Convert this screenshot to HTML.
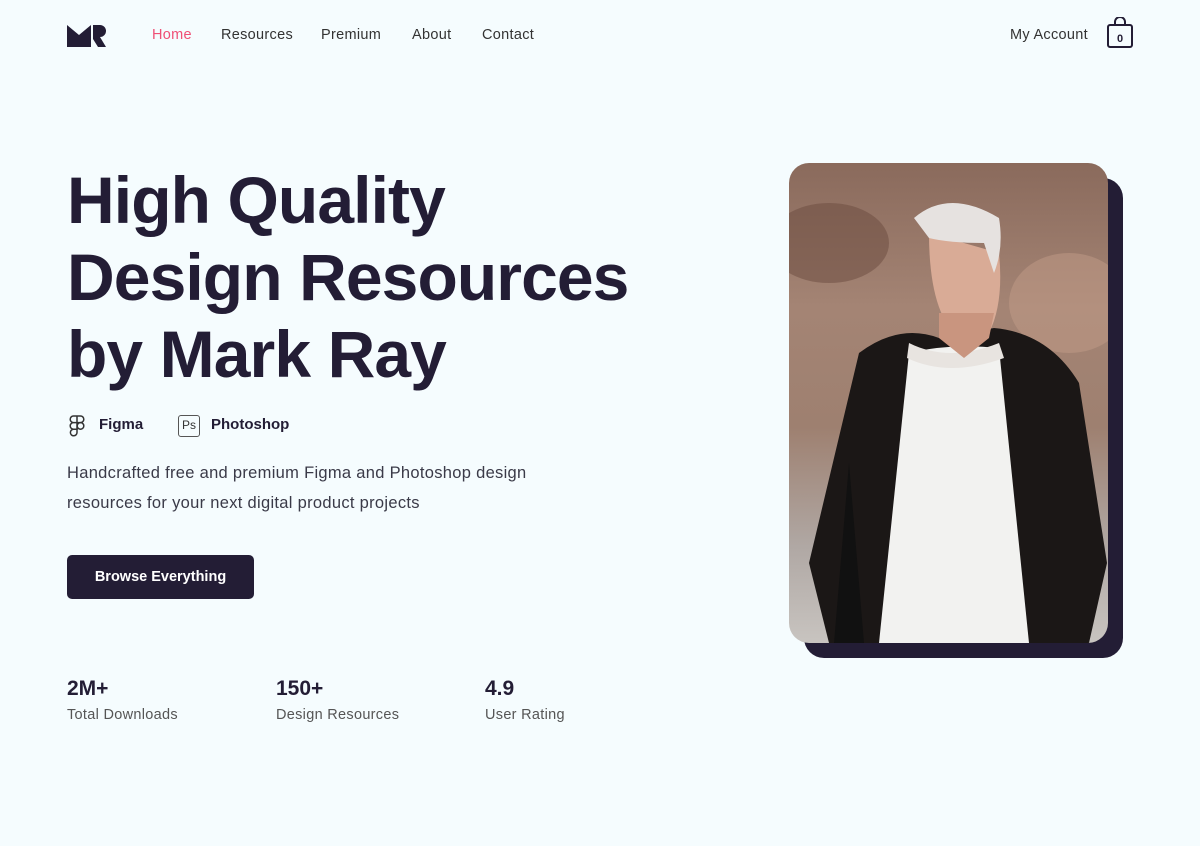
<!DOCTYPE html>
<html><head><meta charset="utf-8"><style>
*{margin:0;padding:0;box-sizing:border-box}
body{width:1200px;height:846px;background:#f5fcfe;font-family:"Liberation Sans",sans-serif;color:#231d35;position:relative;overflow:hidden}
.a{position:absolute}
.nav{top:27px;font-size:14.5px;color:#333;letter-spacing:0.3px}
h1{position:absolute;left:67px;top:162px;font-size:66px;line-height:77px;font-weight:bold;letter-spacing:-0.9px;color:#231d35}
.p{left:67px;top:458px;font-size:16.5px;line-height:30px;color:#3a3a48;letter-spacing:0.3px}
.btn{left:67px;top:555px;width:187px;height:44px;background:#231d35;border-radius:5px;color:#fff;font-size:14.5px;font-weight:bold;text-align:center;line-height:44px}
.sn{font-size:21px;font-weight:bold;top:677px}
.sl{font-size:14.5px;color:#555;top:707px;letter-spacing:0.3px}
</style></head><body>
<svg class="a" style="left:67px;top:25px" width="40" height="22" viewBox="0 0 40 22"><path d="M0 0 L12 10 L24 0 L24 22 L0 22Z" fill="#231d35"/><path d="M26 0 H33 A6 6 0 0 1 33 12 L39 22 H31 L26 14Z" fill="#231d35"/></svg>
<div class="a nav" style="left:152px;color:#ef4f76">Home</div>
<div class="a nav" style="left:221px">Resources</div>
<div class="a nav" style="left:321px">Premium</div>
<div class="a nav" style="left:412px">About</div>
<div class="a nav" style="left:482px">Contact</div>
<div class="a nav" style="left:1010px">My Account</div>
<svg class="a" style="left:1106px;top:17px" width="28" height="32" viewBox="0 0 28 32"><path d="M9 8 V5 A5 5 0 0 1 19 5 V8" fill="none" stroke="#231d35" stroke-width="2"/><rect x="2" y="8" width="24" height="22" rx="2" fill="none" stroke="#231d35" stroke-width="2"/><text x="14" y="25" font-size="11" font-weight="bold" text-anchor="middle" fill="#231d35" font-family="Liberation Sans">0</text></svg>
<h1>High Quality<br>Design Resources<br>by Mark Ray</h1>
<svg class="a" style="left:69px;top:415px" width="16" height="22" viewBox="0 0 16 22"><g fill="none" stroke="#333" stroke-width="1.5"><path d="M8 1H4.5a3.3 3.3 0 0 0 0 6.6H8Z M8 1h3.5a3.3 3.3 0 0 1 0 6.6H8Z M8 7.6H4.5a3.3 3.3 0 0 0 0 6.6H8Z"/><circle cx="11.5" cy="10.9" r="3.3"/><path d="M8 14.2H4.5a3.3 3.3 0 1 0 3.5 3.3Z"/></g></svg>
<div class="a" style="left:99px;top:416px;font-size:15px;font-weight:bold">Figma</div>
<div class="a" style="left:178px;top:415px;width:22px;height:22px;border:1.5px solid #555;border-radius:3px;font-size:12px;text-align:center;line-height:19px;color:#333">Ps</div>
<div class="a" style="left:211px;top:416px;font-size:15px;font-weight:bold">Photoshop</div>
<div class="a p">Handcrafted free and premium Figma and Photoshop design<br>resources for your next digital product projects</div>
<div class="a btn">Browse Everything</div>
<div class="a sn" style="left:67px">2M+</div><div class="a sl" style="left:67px">Total Downloads</div>
<div class="a sn" style="left:276px">150+</div><div class="a sl" style="left:276px">Design Resources</div>
<div class="a sn" style="left:485px">4.9</div><div class="a sl" style="left:485px">User Rating</div>
<div class="a" style="left:804px;top:178px;width:319px;height:480px;background:#231d35;border-radius:20px"></div>
<div class="a" style="left:789px;top:163px;width:319px;height:480px;border-radius:20px;overflow:hidden;background:linear-gradient(180deg,#8a6a5c 0%,#a48474 30%,#9e8070 55%,#b0a8a4 80%,#c8c4c0 100%)">
<svg width="319" height="480" viewBox="0 0 319 480">
<ellipse cx="40" cy="80" rx="60" ry="40" fill="#6a4a3e" opacity=".5"/>
<ellipse cx="280" cy="140" rx="60" ry="50" fill="#c29c88" opacity=".5"/>
<path d="M70 190 Q110 160 150 175 L205 165 Q260 170 290 220 L318 400 L300 480 L40 480 L20 400 Z" fill="#1b1716"/>
<path d="M120 190 Q160 180 210 185 L240 480 L90 480 Z" fill="#f2f2f0"/>
<path d="M120 180 Q160 200 210 180 L215 195 Q160 215 118 195Z" fill="#e8e4e0"/>
<path d="M140 70 Q140 150 170 175 L200 170 Q215 140 210 90Z" fill="#d9ab96"/>
<path d="M125 55 Q160 25 210 55 Q215 85 205 110 L195 80 Q160 80 140 75 Z" fill="#e6e2e0"/>
<path d="M150 175 L175 195 L200 175 L205 150 L150 150Z" fill="#c9957f"/>
<path d="M60 300 L75 480 L45 480 Z" fill="#111"/>
</svg></div>
</body></html>
